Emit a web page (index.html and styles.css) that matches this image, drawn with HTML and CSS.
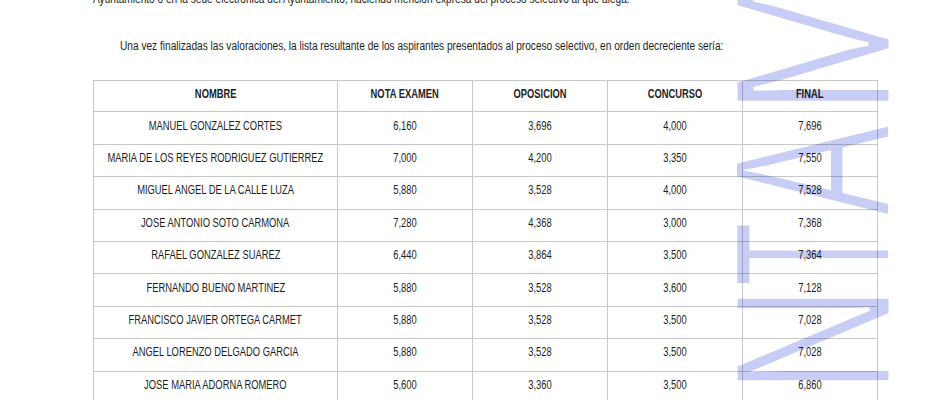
FILE: index.html
```html
<!DOCTYPE html>
<html lang="es">
<head>
<meta charset="utf-8">
<title>Lista de aspirantes</title>
<link rel="stylesheet" href="styles.css">
</head>
<body>
<div class="page">
  <p class="line-cut"><span class="nx-left">Ayuntamiento o en la sede electrónica del Ayuntamiento, haciendo mención expresa del proceso selectivo al que alega.</span></p>
  <p class="intro"><span class="nx-left">Una vez finalizadas las valoraciones, la lista resultante de los aspirantes presentados al proceso selectivo, en orden decreciente sería:</span></p>
  <table class="results">
    <colgroup>
      <col class="c-name"><col class="c-num"><col class="c-num"><col class="c-num"><col class="c-num">
    </colgroup>
    <thead>
      <tr><th><span class="nx">NOMBRE</span></th><th><span class="nx">NOTA EXAMEN</span></th><th><span class="nx">OPOSICION</span></th><th><span class="nx">CONCURSO</span></th><th><span class="nx">FINAL</span></th></tr>
    </thead>
    <tbody>
      <tr><td><span class="nx">MANUEL GONZALEZ CORTES</span></td><td><span class="nx">6,160</span></td><td><span class="nx">3,696</span></td><td><span class="nx">4,000</span></td><td><span class="nx">7,696</span></td></tr>
      <tr><td><span class="nx">MARIA DE LOS REYES RODRIGUEZ GUTIERREZ</span></td><td><span class="nx">7,000</span></td><td><span class="nx">4,200</span></td><td><span class="nx">3,350</span></td><td><span class="nx">7,550</span></td></tr>
      <tr><td><span class="nx">MIGUEL ANGEL DE LA CALLE LUZA</span></td><td><span class="nx">5,880</span></td><td><span class="nx">3,528</span></td><td><span class="nx">4,000</span></td><td><span class="nx">7,528</span></td></tr>
      <tr><td><span class="nx">JOSE ANTONIO SOTO CARMONA</span></td><td><span class="nx">7,280</span></td><td><span class="nx">4,368</span></td><td><span class="nx">3,000</span></td><td><span class="nx">7,368</span></td></tr>
      <tr><td><span class="nx">RAFAEL GONZALEZ SUAREZ</span></td><td><span class="nx">6,440</span></td><td><span class="nx">3,864</span></td><td><span class="nx">3,500</span></td><td><span class="nx">7,364</span></td></tr>
      <tr><td><span class="nx">FERNANDO BUENO MARTINEZ</span></td><td><span class="nx">5,880</span></td><td><span class="nx">3,528</span></td><td><span class="nx">3,600</span></td><td><span class="nx">7,128</span></td></tr>
      <tr><td><span class="nx">FRANCISCO JAVIER ORTEGA CARMET</span></td><td><span class="nx">5,880</span></td><td><span class="nx">3,528</span></td><td><span class="nx">3,500</span></td><td><span class="nx">7,028</span></td></tr>
      <tr><td><span class="nx">ANGEL LORENZO DELGADO GARCIA</span></td><td><span class="nx">5,880</span></td><td><span class="nx">3,528</span></td><td><span class="nx">3,500</span></td><td><span class="nx">7,028</span></td></tr>
      <tr><td><span class="nx">JOSE MARIA ADORNA ROMERO</span></td><td><span class="nx">5,600</span></td><td><span class="nx">3,360</span></td><td><span class="nx">3,500</span></td><td><span class="nx">6,860</span></td></tr>
    </tbody>
  </table>
</div>
<svg class="watermark" width="945" height="400" viewBox="0 0 945 400" aria-hidden="true">
  <g class="wm-letters">
    <text transform="translate(890.5 -20) rotate(-90) scale(0.6 1)">I</text>
    <text transform="translate(890.5 117) rotate(-90) scale(0.77 1)">M</text>
    <text transform="translate(890.5 216.5) rotate(-90) scale(0.61 1)">A</text>
    <text transform="translate(890.5 286.5) rotate(-90) scale(0.465 1)">T</text>
    <text transform="translate(890.5 394.5) rotate(-90) scale(0.67 1)">N</text>
    <text transform="translate(890.5 500) rotate(-90) scale(0.67 1)">U</text>
  </g>
</svg>
</body>
</html>
```
FILE: styles.css
```css
html, body {
  margin: 0;
  padding: 0;
  background: #ffffff;
}

body {
  position: relative;
  width: 945px;
  height: 400px;
  overflow: hidden;
  font-family: "Liberation Sans", Arial, sans-serif;
  color: #1e1e1e;
}

.page {
  padding-left: 93px;
}

.line-cut,
.intro {
  font-size: 12.5px;
  line-height: 16px;
  white-space: nowrap;
}

.line-cut {
  margin: -9px 0 0 0;
}

.intro {
  margin: 31px 0 0 27px;
}

.nx-left {
  display: inline-block;
  transform: scaleX(0.81);
  transform-origin: left center;
}

.results {
  margin-top: 26px;
  border-collapse: collapse;
  table-layout: fixed;
  width: 784px;
  font-size: 12px;
}

.c-name { width: 244px; }
.c-num { width: 135px; }

.results th,
.results td {
  border: 1px solid #c8c8c8;
  text-align: center;
  vertical-align: middle;
  padding: 0 0 5px 0;
  height: 26.4px;
  white-space: nowrap;
}

.results th {
  font-weight: bold;
  height: 25.4px;
}

.nx {
  display: inline-block;
  margin: 0 -40px;
  transform: scaleX(0.78);
  transform-origin: center center;
}

.watermark {
  position: absolute;
  left: 0;
  top: 0;
  pointer-events: none;
  mix-blend-mode: multiply;
}

.wm-letters text {
  font-family: "Liberation Sans", Arial, sans-serif;
  font-size: 227px;
  fill: #c8cdf6;
  stroke: #ffffff;
  stroke-width: 5px;
  stroke-linejoin: miter;
}
```
